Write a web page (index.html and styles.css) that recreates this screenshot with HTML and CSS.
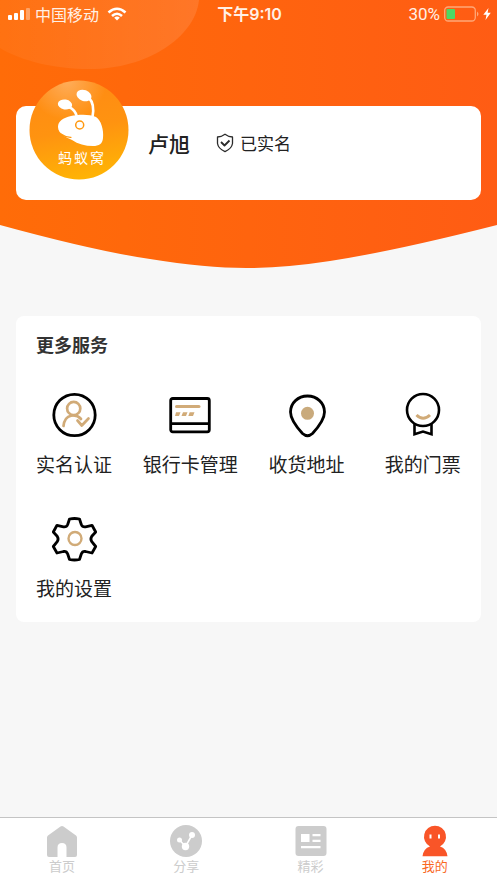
FILE: index.html
```html
<!DOCTYPE html>
<html lang="zh-CN">
<head>
<meta charset="utf-8">
<meta name="viewport" content="width=device-width, initial-scale=1">
<title>我的</title>
<link rel="stylesheet" href="styles.css">
</head>
<body>
<header class="hero">
  <svg class="hero-bg" viewBox="0 0 497 268" preserveAspectRatio="none" aria-hidden="true">
    <defs>
      <linearGradient id="heroFill" x1="0" y1="0" x2="1" y2="0">
        <stop offset="0" stop-color="#ff6c08"/>
        <stop offset="1" stop-color="#ff5c14"/>
      </linearGradient>
      <linearGradient id="glow" x1="0" y1="0" x2="1" y2="0">
        <stop offset="0" stop-color="#fff" stop-opacity=".04"/>
        <stop offset="1" stop-color="#fff" stop-opacity=".11"/>
      </linearGradient>
    </defs>
    <path d="M0 0H497V225Q395 251 330 261Q285 268 246 268Q206 268 150 259Q95 251 0 225Z" fill="url(#heroFill)"/>
    <path d="M0 0H199C195 38 146 69 90 69C54 69 22 61 0 48Z" fill="url(#glow)"/>
  </svg>
  <div class="status">
    <div class="status-side">
      <svg class="signal" viewBox="0 0 22 14" fill="#fff" aria-hidden="true">
        <rect x="0" y="8" width="4" height="5" rx="1"/><rect x="6" y="6" width="4" height="7" rx="1"/><rect x="12" y="3" width="4" height="10" rx="1"/><rect x="18" y="1" width="4" height="12" rx="1" opacity=".35"/>
      </svg>
      <span class="carrier">中国移动</span>
      <svg class="wifi" viewBox="0 0 20 14" fill="none" stroke="#fff" stroke-width="2.6" aria-hidden="true">
        <path d="M1.500 5.500Q10 -2 18.500 5.500M5 9Q10 4.500 15 9"/><path d="M10 13.500L7.200 10.700Q10 8.500 12.800 10.700Z" fill="#fff" stroke="none"/>
      </svg>
    </div>
    <time class="clock">下午9:10</time>
    <div class="status-side status-end">
      <span class="percent">30%</span>
      <svg class="battery" viewBox="0 0 35 16" aria-hidden="true">
        <rect x=".7" y="1" width="30.600" height="14" rx="3.500" fill="none" stroke="#ffa878" stroke-width="1.300"/>
        <rect x="2.500" y="3" width="8.500" height="10" rx="1" fill="#4cd964"/>
        <path d="M33 5.500Q36 8 33 10.500Z" fill="#ffa878"/>
      </svg>
      <svg class="bolt" viewBox="0 0 8 12" fill="#fff" aria-hidden="true"><path d="M5.500 0L.3 6.800H3.500L2.500 12L7.800 4.800H4.600Z"/></svg>
    </div>
  </div>
  <section class="profile">
    <svg class="avatar" viewBox="0 0 100 100" role="img" aria-label="蚂蚁窝">
      <defs>
        <linearGradient id="orb" x1=".35" y1="0" x2=".55" y2="1">
          <stop offset="0" stop-color="#ff8a14"/><stop offset=".5" stop-color="#ff9310"/><stop offset="1" stop-color="#ffb405"/>
        </linearGradient>
        <radialGradient id="shine" cx=".38" cy="0" r=".4">
          <stop offset="0" stop-color="#fff" stop-opacity=".3"/><stop offset="1" stop-color="#fff" stop-opacity="0"/>
        </radialGradient>
      </defs>
      <circle cx="50" cy="50" r="49.500" fill="url(#orb)"/>
      <circle cx="50" cy="50" r="49.500" fill="url(#shine)"/>
      <g fill="#fff">
        <ellipse cx="36" cy="24.500" rx="7.200" ry="5" transform="rotate(10 36 24.500)"/>
        <ellipse cx="55" cy="15.500" rx="7.700" ry="5.500" transform="rotate(20 55 15.500)"/>
        <path d="M29 47C29 41 34 38 42 36C48 34.500 60 33.500 67 37C72 40 75 50 74 58C73.500 64 70 66 64 66C56 66 49 64 43 60C38 57.500 29 54 29 47Z"/>
      </g>
      <path d="M40 27Q46.500 30 48 37M60 18Q66 24 63.500 37" fill="none" stroke="#fff" stroke-width="2.600" stroke-linecap="round"/>
      <circle cx="50.700" cy="45" r="4" fill="#fff" stroke="#ff980e" stroke-width="1.500"/>
      <path d="M32 54Q37 57.500 42 57.300" fill="none" stroke="#ff980e" stroke-width="1.200" stroke-linecap="round"/>
      <text class="avatar-text" x="29" y="83">蚂</text><text class="avatar-text" x="45" y="83">蚁</text><text class="avatar-text" x="61" y="83">窝</text>
    </svg>
    <h1 class="name">卢旭</h1>
    <div class="verified">
      <svg class="shield" viewBox="0 0 18 20" fill="none" stroke="#2b2b2b" stroke-width="1.300" stroke-linejoin="round" aria-hidden="true">
        <path d="M9 1.200Q12.500 3.800 16.500 4V10.500Q15.800 15.500 9 18.700Q2.200 15.500 1.500 10.500V4Q5.500 3.800 9 1.200Z"/><path d="M5 9L8.500 12.500L13.500 7.500" stroke-width="1.800"/>
      </svg>
      <span>已实名</span>
    </div>
  </section>
</header>

<main class="services">
  <h2 class="services-title">更多服务</h2>
  <nav class="service-grid" aria-label="更多服务">
    <a class="service" href="#verify">
      <svg class="service-icon" viewBox="0 0 48 48" fill="none" stroke="#000" aria-hidden="true">
        <circle cx="24.500" cy="24" r="20.700" stroke-width="2.800"/>
        <g stroke="#d1ab78" stroke-width="2.700" stroke-linecap="round" stroke-linejoin="round"><circle cx="23.700" cy="17.500" r="6.600"/><path d="M13.500 35Q14.500 26 21 24.700Q27 23.500 31 28M27.500 29.500L31.800 34.500L38.500 27.500"/></g>
      </svg>
      <span>实名认证</span>
    </a>
    <a class="service" href="#cards">
      <svg class="service-icon" viewBox="0 0 48 48" fill="none" stroke="#000" stroke-width="2.800" aria-hidden="true">
        <rect x="4.700" y="7.500" width="38.600" height="33.300" rx="2"/><path d="M4.700 32.700H43.300"/>
        <path d="M10.500 15.500H33" stroke="#d1ab78" stroke-width="3" stroke-linecap="round"/>
        <path d="M10 21.200H14.500L13 25H9ZM17 21.200H21.500L20 25H15.500ZM23.700 21.200H28.500L27 25H22.300Z" fill="#d1ab78" stroke="none"/>
      </svg>
      <span>银行卡管理</span>
    </a>
    <a class="service" href="#address">
      <svg class="service-icon" viewBox="0 0 48 48" fill="none" aria-hidden="true">
        <path d="M24.500 5C34 5 41.500 12 41.500 21C41.500 28 35 36.500 29.500 42.500Q24.500 47 19.500 42.500C14 36.500 7.500 28 7.500 21C7.500 12 15 5 24.500 5Z" stroke="#000" stroke-width="2.800"/><circle cx="24.500" cy="22.300" r="6.500" fill="#c9aa7c"/>
      </svg>
      <span>收货地址</span>
    </a>
    <a class="service" href="#tickets">
      <svg class="service-icon" viewBox="0 0 48 48" fill="none" stroke="#000" stroke-width="2.600" aria-hidden="true">
        <circle cx="24" cy="19" r="16"/><path d="M15.500 32.500V43.200L24 40.500L32.500 43.200V32.500"/><path d="M17.500 24Q24 30.500 31 24" stroke="#d1ab78" stroke-width="3"/>
      </svg>
      <span>我的门票</span>
    </a>
    <a class="service" href="#settings">
      <svg class="service-icon" viewBox="0 0 48 48" fill="none" aria-hidden="true">
        <path d="M19.500 4Q24.500 3 29.500 4L31.300 9.500Q32.500 12.300 35.500 11.800L42 10.300L45.700 17L41.800 21.300Q40 24 41.800 26.700L45.700 31.500L42 38L35.500 36.500Q32.500 36 31.300 39L29.500 44.500Q24.500 45.500 19.500 44.500L17.700 39Q16.500 36 13.500 36.500L7 38L3.300 31.500L7.200 26.700Q9 24 7.200 21.300L3.300 17L7 10.300L13.500 11.800Q16.500 12.300 17.700 9.500Z" stroke="#000" stroke-width="2.800" stroke-linejoin="round"/><circle cx="25" cy="23.500" r="6.500" stroke="#d1ab78" stroke-width="2.400"/>
      </svg>
      <span>我的设置</span>
    </a>
  </nav>
</main>

<nav class="tabs" aria-label="主导航">
  <a class="tab" href="#home">
    <svg class="tab-icon" viewBox="0 0 32 32" fill="#ccc" aria-hidden="true"><path d="M14.500 1.500Q16 .5 17.500 1.500L30 10.500Q31 11.300 31 12.500V30Q31 32 29 32H20.500V22.500Q20.500 18 16 18Q11.500 18 11.500 22.500V32H3Q1 32 1 30V12.500Q1 11.300 2 10.500Z"/></svg>
    <span>首页</span>
  </a>
  <a class="tab" href="#share">
    <svg class="tab-icon" viewBox="0 0 32 32" aria-hidden="true"><circle cx="16" cy="16" r="16" fill="#ccc"/><path d="M9.500 15L15.500 21.500L22 10" fill="none" stroke="#fff" stroke-width="1.600"/><g fill="#fff"><circle cx="9.500" cy="15" r="2.500"/><circle cx="22" cy="10" r="3"/><circle cx="15.500" cy="21.500" r="3.700"/></g></svg>
    <span>分享</span>
  </a>
  <a class="tab" href="#featured">
    <svg class="tab-icon" viewBox="0 0 32 32" aria-hidden="true"><rect x=".5" y="1" width="31" height="30" rx="3" fill="#ccc"/><path d="M6 9H14.500V17H6ZM17.500 9H25.500V11.300H17.500ZM17.500 14.700H25.500V17H17.500ZM6 21H25.500V23.300H6Z" fill="#fff"/></svg>
    <span>精彩</span>
  </a>
  <a class="tab tab-active" href="#me" aria-current="page">
    <svg class="tab-icon" viewBox="0 0 32 32" aria-hidden="true"><path d="M16 .700A11 11 0 0 1 21 21.500Q27.500 23.500 28.500 31.300H3.500Q4.500 23.500 11 21.500A11 11 0 0 1 16 .700Z" fill="#f95528"/><path d="M10.500 9.500H12.500V13.500H10.500ZM19 9.500H21V13.500H19Z" fill="#fff"/></svg>
    <span>我的</span>
  </a>
</nav>
</body>
</html>
```
FILE: styles.css
```css
* {
  box-sizing: border-box;
}

body {
  margin: 0;
  min-height: 100vh;
  display: flex;
  flex-direction: column;
  background: #f7f7f7;
  color: #222;
  font-family: "Noto Sans CJK SC", sans-serif;
}

a {
  color: inherit;
  text-decoration: none;
}

svg {
  display: block;
  flex: none;
}

.hero {
  position: relative;
  padding: 0 16px 68px;
}

.hero-bg {
  position: absolute;
  inset: 0;
  z-index: -1;
  width: 100%;
  height: 100%;
}

.status {
  display: grid;
  grid-template-columns: 1fr auto 1fr;
  align-items: center;
  height: 28px;
  margin: 0 -10px 0 -8px;
  color: #fff0e6;
  font-size: 16px;
  line-height: 26px;
}

.status-side {
  display: flex;
  align-items: center;
}

.status-end {
  justify-content: flex-end;
}

.signal {
  width: 22px;
  height: 14px;
}

.carrier {
  margin: 0 8px 0 5px;
}

.wifi {
  width: 20px;
  height: 14px;
}

.clock {
  font-family: Inter, "Noto Sans CJK SC", sans-serif;
  font-weight: 600;
}

.percent {
  font-family: Roboto, sans-serif;
  font-size: 17px;
}

.battery {
  width: 35px;
  height: 16px;
  margin: 0 4px;
}

.bolt {
  width: 8px;
  height: 12px;
}

.profile {
  display: flex;
  align-items: center;
  margin-top: 78px;
  padding: 0 13px 20px;
  border-radius: 10px;
  background: #fff;
}

.avatar {
  width: 100px;
  height: 100px;
  margin-top: -26px;
}

.avatar-text {
  fill: #fff;
  font-size: 14px;
}

.name {
  margin: 0 26px 0 19px;
  font-size: 21px;
  font-weight: 500;
  line-height: 28px;
}

.verified {
  display: flex;
  align-items: center;
  gap: 6px;
  font-size: 17px;
  line-height: 28px;
}

.shield {
  width: 18px;
  height: 20px;
}

.services {
  margin: 48px 16px 24px;
  padding: 14px 0 20px;
  border-radius: 8px;
  background: #fff;
}

.services-title {
  margin: 0 20px 33px;
  color: #333;
  font-size: 18px;
  font-weight: 700;
  line-height: 28px;
}

.service-grid {
  display: grid;
  grid-template-columns: repeat(4, 1fr);
  row-gap: 37px;
}

.service {
  display: flex;
  flex-direction: column;
  align-items: center;
  gap: 11px;
  font-size: 19px;
  line-height: 28px;
  white-space: nowrap;
}

.service-icon {
  width: 48px;
  height: 48px;
}

.tabs {
  display: grid;
  grid-template-columns: repeat(4, 1fr);
  margin-top: auto;
  padding: 7px 0 8px;
  border-top: 1px solid #c4c4c4;
  background: #fff;
}

.tab {
  display: flex;
  flex-direction: column;
  align-items: center;
  color: #ccc;
  font-size: 13px;
  line-height: 18px;
}

.tab-icon {
  width: 32px;
  height: 32px;
}

.tab-active {
  color: #f9691f;
}
```
